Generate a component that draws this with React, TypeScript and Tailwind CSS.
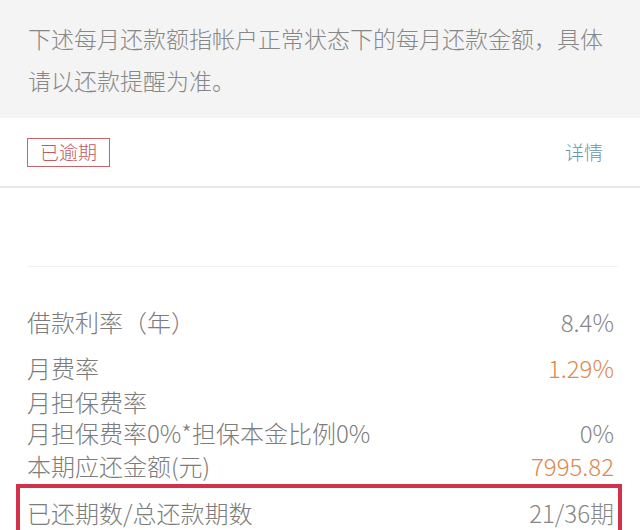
import React from "react";

const font = { fontFamily: '"Noto Sans CJK SC", "Noto Sans", sans-serif' };

function Row({
  label,
  value,
  orange,
  className = "",
}: {
  label: string;
  value?: string;
  orange?: boolean;
  className?: string;
}) {
  return (
    <div className={`flex items-center justify-between h-[30px] leading-[30px] ${className}`}>
      <span className="text-[24px] text-[#7c7c7c]">{label}</span>
      {value !== undefined && (
        <span className={`text-[24px] ${orange ? "text-[#e0884e]" : "text-[#868686]"}`}>{value}</span>
      )}
    </div>
  );
}

export default function App() {
  return (
    <div className="w-[640px] h-[530px] overflow-hidden bg-white font-light" style={font}>
      <div className="bg-[#f4f4f4] h-[118px] pt-[17px] pl-[28px] pr-[20px] text-[23px] leading-[42px] text-[#878787]">
        <div>下述每月还款额指帐户正常状态下的每月还款金额，具体</div>
        <div>请以还款提醒为准。</div>
      </div>
      <div className="h-[68px] flex items-center justify-between pl-[27px] pr-[37px]">
        <div className="h-[29px] w-[83px] border-[1.5px] border-[#c4656c] flex items-center justify-center text-[19px] text-[#c0585e]">
          已逾期
        </div>
        <div className="text-[19px] text-[#6896a6]">详情</div>
      </div>
      <div className="h-[2px] bg-[#e9e9e9]" />
      <div className="h-[78px]" />
      <div className="mx-[28px] mr-[22px] h-[1px] bg-[#f1f1f1]" />
      <div className="px-[27px] pr-[26px]">
        <Row label="借款利率（年）" value="8.4%" className="mt-[40px]" />
        <Row label="月费率" value="1.29%" orange className="mt-[16px]" />
        <Row label="月担保费率" className="mt-[4px]" />
        <Row label="月担保费率0%*担保本金比例0%" value="0%" className="mt-[1px]" />
        <Row label="本期应还金额(元)" value="7995.82" orange className="mt-[3px]" />
      </div>
      <div className="mt-[3px] mx-[16px] mr-[18px] border-[4px] border-[#d4304a] pt-[10px] pl-[7px] pr-[4px] h-[60px]">
        <Row label="已还期数/总还款期数" value="21/36期" />
      </div>
    </div>
  );
}
